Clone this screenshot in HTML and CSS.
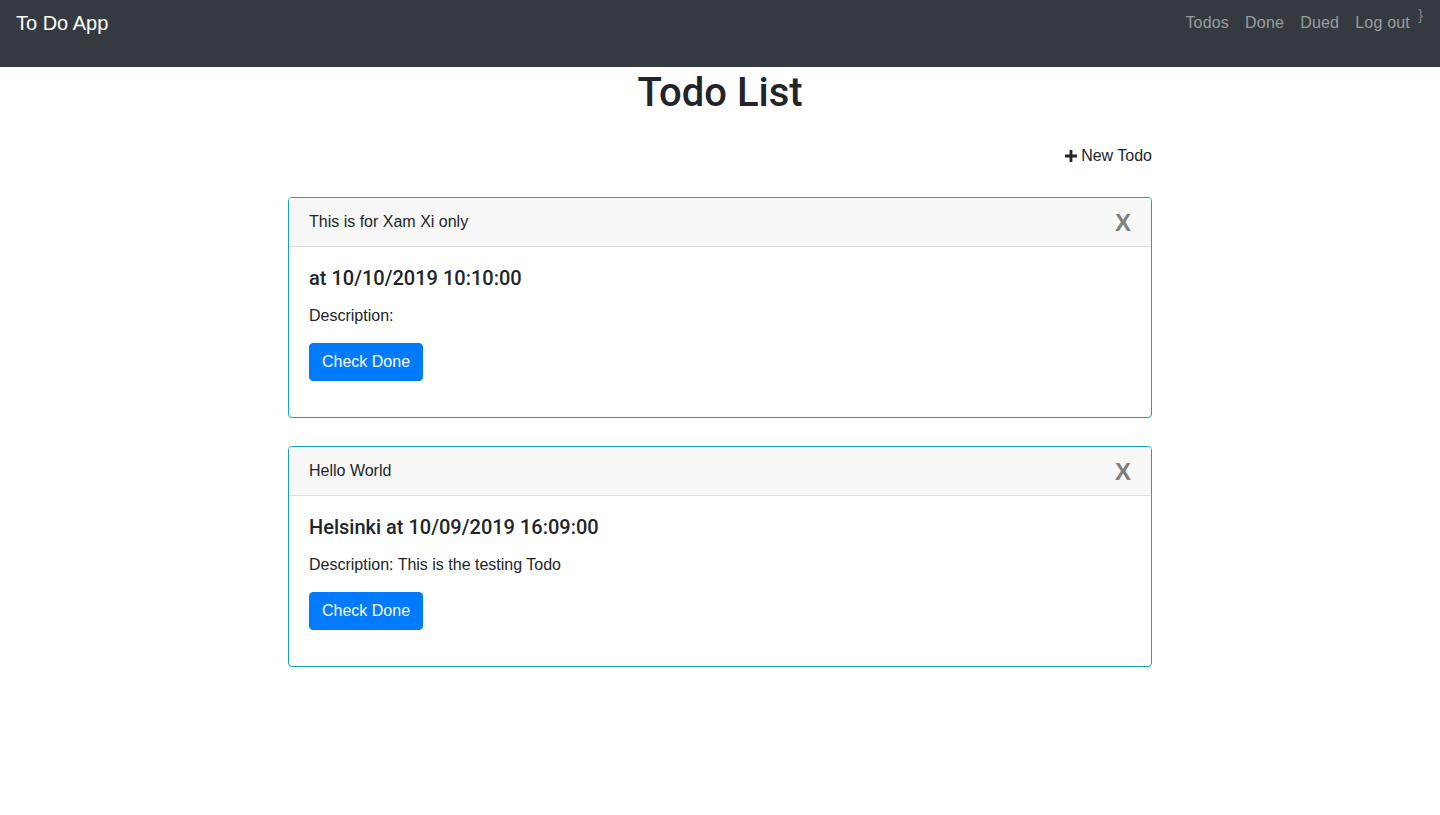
FILE: index.html
```html
<!DOCTYPE html>
<html>
<head>
<meta charset="utf-8">
<title>To Do App</title>
<link rel="stylesheet" href="styles.css">
</head>
<body>
<nav class="navbar">
  <a class="brand" href="#">To Do App</a>
  <ul class="nav-links">
    <li><a href="#">Todos</a></li>
    <li><a href="#">Done</a></li>
    <li><a href="#">Dued</a></li>
    <li><a href="#">Log out</a></li>
  </ul>
  <span class="stray">}</span>
</nav>
<main class="container">
  <h1 class="page-title">Todo List</h1>
  <div class="actions">
    <a class="new-todo" href="#"><svg class="plus" viewBox="0 0 12 12" width="12" height="12"><path d="M4.6 0h2.8v4.6H12v2.8H7.4V12H4.6V7.4H0V4.6h4.6z" fill="#212529"/></svg>New Todo</a>
  </div>
  <div class="card">
    <div class="card-header">
      <span>This is for Xam Xi only</span>
      <span class="close">X</span>
    </div>
    <div class="card-body">
      <h5 class="card-title">at 10/10/2019 10:10:00</h5>
      <p class="card-text">Description: </p>
      <button class="btn">Check Done</button>
    </div>
  </div>
  <div class="card">
    <div class="card-header">
      <span>Hello World</span>
      <span class="close">X</span>
    </div>
    <div class="card-body">
      <h5 class="card-title">Helsinki at 10/09/2019 16:09:00</h5>
      <p class="card-text">Description: This is the testing Todo</p>
      <button class="btn">Check Done</button>
    </div>
  </div>
</main>
</body>
</html>
```
FILE: styles.css
```css
* { box-sizing: border-box; }
html, body { margin: 0; padding: 0; }
body {
  font-family: "Liberation Sans", Arial, sans-serif;
  font-size: 16px;
  line-height: 1.5;
  color: #212529;
  background: #fff;
}
a { text-decoration: none; }
.navbar {
  position: relative;
  height: 67px;
  background: #343a40;
  display: flex;
  justify-content: space-between;
  align-items: flex-start;
  padding: 8px 30px 0 16px;
}
.brand {
  color: #fff;
  font-size: 20px;
  line-height: 30px;
}
.nav-links {
  list-style: none;
  margin: 0;
  padding: 0;
  display: flex;
  gap: 16px;
}
.nav-links a {
  display: block;
  color: rgba(255,255,255,.5);
  line-height: 30px;
  letter-spacing: 0.2px;
}
.stray {
  position: absolute;
  right: 17px;
  top: 5px;
  font-size: 14px;
  line-height: 20px;
  color: rgba(255,255,255,.4);
}
.container {
  width: 864px;
  margin: 0 auto;
}
.page-title {
  margin: 2px 0 0;
  font-family: Roboto, "Liberation Sans", sans-serif;
  font-size: 40px;
  font-weight: 500;
  line-height: 48px;
  text-align: center;
}
.actions {
  display: flex;
  justify-content: flex-end;
  margin-top: 27px;
  margin-bottom: 29px;
}
.new-todo {
  color: #212529;
  display: flex;
  align-items: center;
  gap: 4px;
}
.plus { display: block; }
.card {
  border: 1px solid #17a2b8;
  border-radius: 4px;
  margin-bottom: 28px;
  overflow: hidden;
}
.card-header {
  background: #f7f7f7;
  border-bottom: 1px solid #dcdcdc;
  height: 49px;
  padding: 0 20px;
  display: flex;
  justify-content: space-between;
  align-items: center;
}
.close {
  font-size: 24px;
  font-weight: 700;
  color: #7f7f7f;
  line-height: 1;
  margin-top: 2px;
}
.card-body {
  padding: 19px 20px 36px;
}
.card-title {
  margin: 0 0 14px;
  font-family: Roboto, "Liberation Sans", sans-serif;
  font-size: 20px;
  font-weight: 500;
  line-height: 24px;
}
.card-text {
  margin: 0 0 15px;
}
.btn {
  display: block;
  font-family: inherit;
  font-size: 16px;
  line-height: 24px;
  color: #fff;
  background: #007bff;
  border: 1px solid #007bff;
  border-radius: 4px;
  padding: 6px 12px;
  height: 38px;
}
```
